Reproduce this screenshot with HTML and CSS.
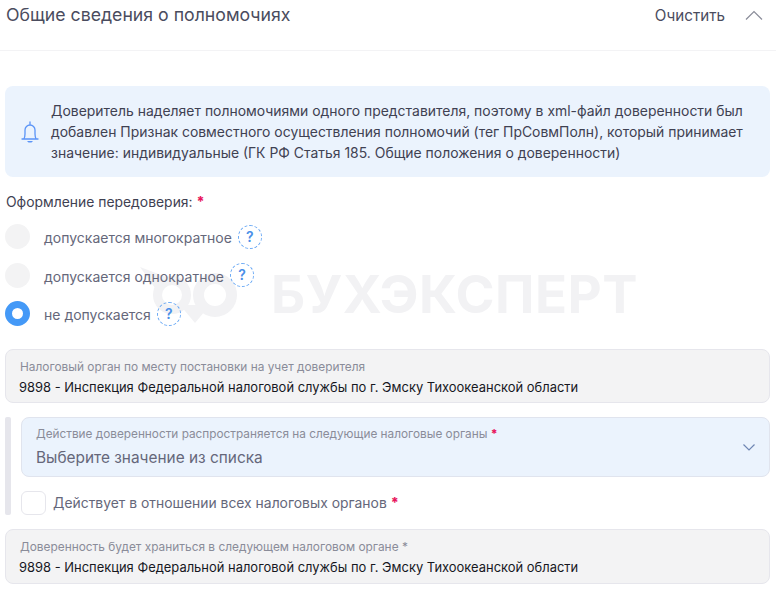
FILE: index.html
```html
<!DOCTYPE html>
<html lang="ru">
<head>
<meta charset="utf-8">
<title>Общие сведения о полномочиях</title>
<link rel="stylesheet" href="styles.css">
</head>
<body>
<div class="watermark">
  <svg class="wm-logo" width="100" height="64" viewBox="0 0 100 64"><circle cx="33" cy="33" r="14.500" fill="none" stroke="#f2f2f4" stroke-width="9"/><circle cx="76" cy="33" r="16.500" fill="none" stroke="#f2f2f4" stroke-width="11"/><path d="M41 43 L56 61 L71 43Z" fill="#f2f2f4"/><path d="M1 5 L30 16 L16 26Z" fill="#f2f2f4"/></svg>
  <span class="wm-text">БУХЭКСПЕРТ</span>
</div>
<header class="head">
  <h1 class="title">Общие сведения о полномочиях</h1>
  <div class="head-actions">
    <span class="clear">Очистить</span>
    <svg width="18" height="10" viewBox="0 0 18 10"><path d="M1 9.500 L9 1.500 L17 9.500" fill="none" stroke="#8a8c99" stroke-width="1.200"/></svg>
  </div>
</header>
<main class="content">
  <section class="info">
    <svg class="bell" width="18" height="22" viewBox="0 0 18 22"><path d="M9 1v3M1 18h16M2.800 18c.9-1.500 1.200-3 1.200-5V9a5 5 0 0 1 10 0v4c0 2 .3 3.500 1.200 5" fill="none" stroke="#5b94f7" stroke-width="1.300" stroke-linecap="round"/><path d="M6 20h6l-1.500 1.500h-3z" fill="#5b94f7"/></svg>
    <p class="info-text">Доверитель наделяет полномочиями одного представителя, поэтому в xml-файл доверенности был добавлен Признак совместного осуществления полномочий (тег ПрСовмПолн), который принимает значение: индивидуальные (ГК РФ Статья 185. Общие положения о доверенности)</p>
  </section>
  <div class="group-label">Оформление передоверия: <span class="req">*</span></div>
  <div class="radios">
    <div class="radio-row"><span class="radio"></span><span class="radio-text">допускается многократное</span><span class="hint">?</span></div>
    <div class="radio-row"><span class="radio"></span><span class="radio-text">допускается однократное</span><span class="hint">?</span></div>
    <div class="radio-row"><span class="radio checked"></span><span class="radio-text">не допускается</span><span class="hint">?</span></div>
  </div>
  <div class="field">
    <div class="field-label">Налоговый орган по месту постановки на учет доверителя</div>
    <div class="field-value">9898 - Инспекция Федеральной налоговой службы по г. Эмску Тихоокеанской области</div>
  </div>
  <div class="nested">
    <div class="nested-bar"></div>
    <div class="nested-body">
      <div class="select">
        <div>
          <div class="field-label">Действие доверенности распространяется на следующие налоговые органы <span class="req">*</span></div>
          <div class="select-value">Выберите значение из списка</div>
        </div>
        <svg width="12" height="7" viewBox="0 0 12 7"><path d="M.5 .5 L6 6 L11.500 .5" fill="none" stroke="#6f86b3" stroke-width="1.200"/></svg>
      </div>
      <div class="check-row"><span class="check"></span><span class="check-text">Действует в отношении всех налоговых органов <span class="req">*</span></span></div>
    </div>
  </div>
  <div class="field">
    <div class="field-label">Доверенность будет храниться в следующем налоговом органе *</div>
    <div class="field-value">9898 - Инспекция Федеральной налоговой службы по г. Эмску Тихоокеанской области</div>
  </div>
</main>
</body>
</html>
```
FILE: styles.css
```css
* { box-sizing: border-box; }
html, body { margin: 0; padding: 0; }
body {
  position: relative;
  width: 776px;
  height: 591px;
  overflow: hidden;
  background: #fff;
  font-family: Inter, "Noto Sans", sans-serif;
  color: #4a4c5e;
}
.watermark {
  position: absolute;
  left: 139px;
  top: 262px;
  display: flex;
  align-items: center;
  gap: 32px;
}
.wm-logo { display: block; }
.wm-text {
  font-size: 52.800px;
  font-weight: 700;
  line-height: 62px;
  color: #f2f2f4;
  letter-spacing: 0.5px;
}
.head {
  position: relative;
  height: 51px;
  padding: 0 13px 0 6px;
  border-bottom: 1px solid #f3f3f5;
  display: flex;
  justify-content: space-between;
  align-items: flex-start;
}
.title {
  margin: 3px 0 0;
  font-size: 17.700px;
  line-height: 24px;
  font-weight: 400;
  color: #4a4c5e;
}
.head-actions {
  display: flex;
  align-items: center;
  gap: 20px;
  margin-top: 3px;
  height: 24px;
}
.clear { font-size: 15.200px; }
.content {
  position: relative;
  padding: 35px 6px 0 5px;
}
.info {
  height: 91px;
  padding: 0 20px 0 16px;
  border-radius: 8px;
  background: #ebf3fd;
  display: flex;
  align-items: center;
  gap: 12px;
}
.bell { flex: none; }
.info-text {
  margin: 0;
  font-size: 13.950px;
  line-height: 21px;
  color: #3f4152;
}
.group-label {
  margin-top: 16px;
  height: 18px;
  padding-left: 1px;
  font-size: 13.900px;
  line-height: 18px;
  color: #3f4152;
}
.req { color: #e8175d; font-weight: 800; }
.radios {
  margin-top: 13px;
  display: flex;
  flex-direction: column;
  gap: 13.500px;
}
.radio-row {
  display: flex;
  align-items: center;
  height: 25px;
}
.radio {
  width: 25px;
  height: 25px;
  border-radius: 50%;
  background: #f3f3f4;
  margin-right: 14px;
}
.radio.checked {
  background: #fff;
  border: 7px solid #4499f7;
}
.radio-text {
  position: relative;
  top: 1px;
  font-size: 14px;
  color: #65677a;
}
.hint {
  width: 24px;
  height: 24px;
  margin-left: 6px;
  border: 1px dashed #6caaf5;
  border-radius: 50%;
  font-size: 14px;
  font-weight: 600;
  line-height: 22px;
  text-align: center;
  color: #4a8fe8;
}
.field {
  margin-top: 23px;
  height: 54px;
  padding: 10px 14px 0 13px;
  border: 1px solid #e6e6ec;
  border-radius: 8px;
  background: #f3f3f4;
}
.field-label {
  padding-left: 1px;
  font-size: 11.880px;
  line-height: 14px;
  color: #8a8c99;
}
.field-value {
  margin-top: 5px;
  font-size: 12.950px;
  line-height: 16px;
  color: #17181f;
}
.nested {
  margin-top: 14px;
  display: flex;
  gap: 10px;
}
.nested-bar {
  width: 6px;
  border-radius: 2px;
  background: #e6e6ec;
}
.nested-body { flex: 1; min-width: 0; }
.select {
  height: 60px;
  padding: 0 14px;
  border: 1px solid #e0e4ee;
  border-radius: 8px;
  background: #ebf3fd;
  display: flex;
  align-items: center;
  justify-content: space-between;
}
.select .field-label {
  padding-left: 0;
  font-size: 11.800px;
}
.select-value {
  margin-top: 7px;
  font-size: 15.400px;
  line-height: 20px;
  color: #65677a;
}
.check-row {
  margin-top: 14px;
  display: flex;
  align-items: center;
  gap: 7px;
  height: 24px;
}
.check {
  width: 25px;
  height: 24px;
  border: 1px solid #e6e6ec;
  border-radius: 6px;
  background: #fff;
}
.check-text {
  font-size: 13.900px;
  color: #65677a;
}
.nested + .field { margin-top: 14px; height: 55px; }
```
